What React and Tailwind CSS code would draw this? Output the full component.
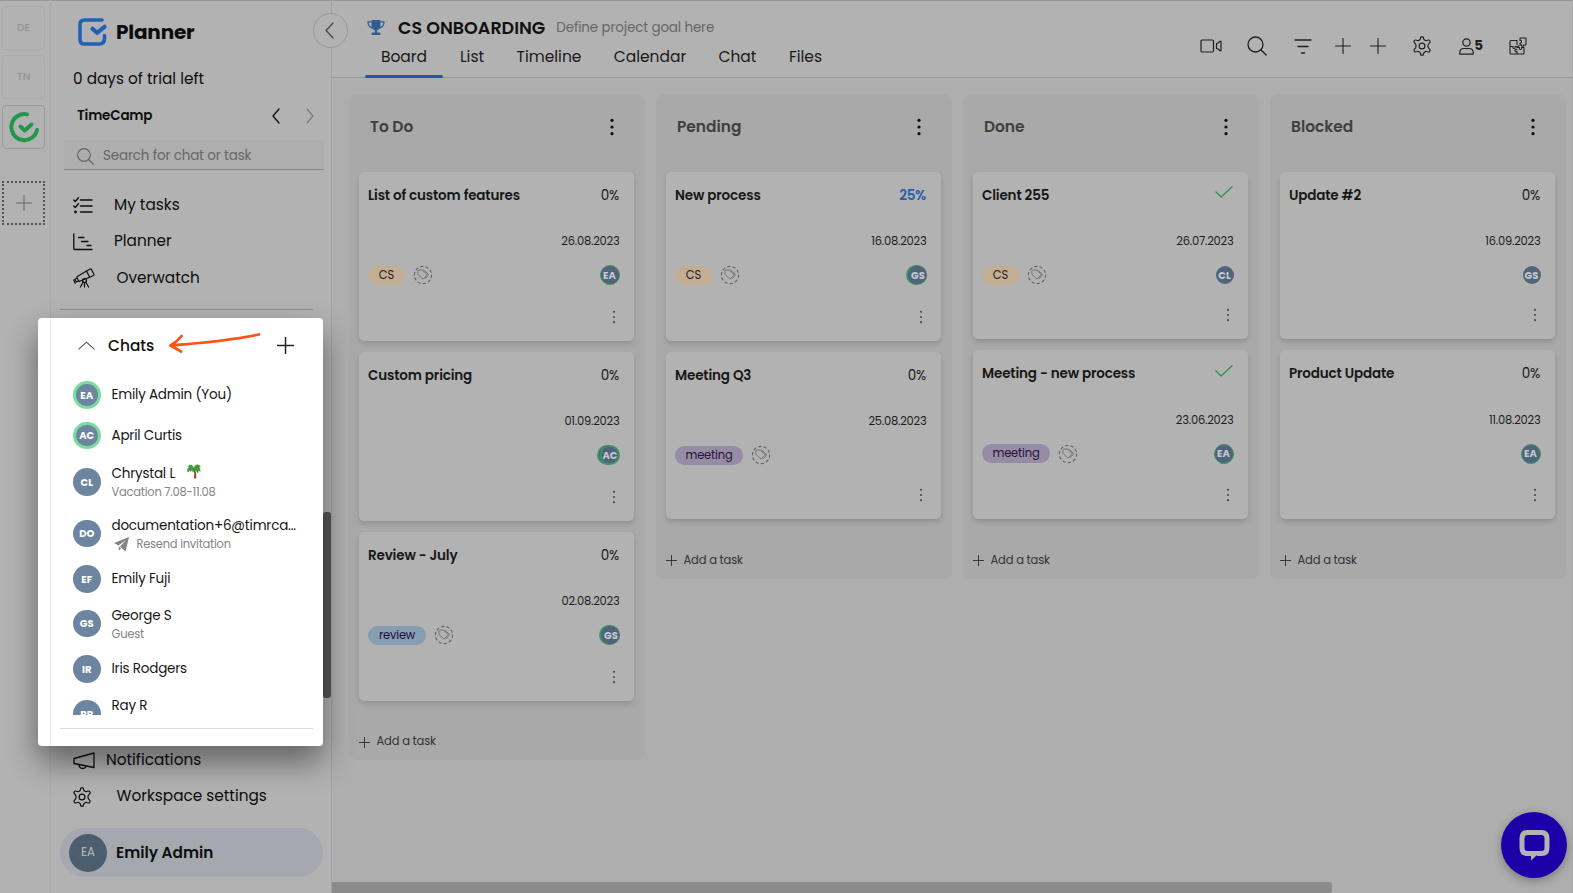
import React from 'react';
import clsx from 'clsx';

const columns = [
  {
    title: 'To Do',
    tasks: [
      { title: 'List of custom features', progress: 0, date: '26.08.2023', tag: 'CS', user: 'EA', ring: 'full' },
      { title: 'Custom pricing', progress: 0, date: '01.09.2023', user: 'AC', ring: 'stack' },
      { title: 'Review - July', progress: 0, date: '02.08.2023', tag: 'review', user: 'GS', ring: 'left' },
    ],
  },
  {
    title: 'Pending',
    tasks: [
      { title: 'New process', progress: 25, date: '16.08.2023', tag: 'CS', user: 'GS', ring: 'left' },
      { title: 'Meeting Q3', progress: 0, date: '25.08.2023', tag: 'meeting' },
    ],
  },
  {
    title: 'Done',
    tasks: [
      { title: 'Client 255', done: true, date: '26.07.2023', tag: 'CS', user: 'CL' },
      { title: 'Meeting - new process', done: true, date: '23.06.2023', tag: 'meeting', user: 'EA', ring: 'full' },
    ],
  },
  {
    title: 'Blocked',
    tasks: [
      { title: 'Update #2', progress: 0, date: '16.09.2023', user: 'GS' },
      { title: 'Product Update', progress: 0, date: '11.08.2023', user: 'EA', ring: 'full' },
    ],
  },
];

const chats = [
  { initials: 'EA', name: 'Emily Admin (You)', online: true, row: 'h-10' },
  { initials: 'AC', name: 'April Curtis', online: true, row: 'h-[41px]' },
  { initials: 'CL', name: 'Chrystal L', note: 'Vacation 7.08-11.08', palm: true, row: 'h-[52px]' },
  { initials: 'DO', name: 'documentation+6@timrca...', note: 'Resend invitation', invite: true, row: 'h-[51px]' },
  { initials: 'EF', name: 'Emily Fuji', row: 'h-10' },
  { initials: 'GS', name: 'George S', note: 'Guest', row: 'h-[49px]' },
  { initials: 'IR', name: 'Iris Rodgers', row: 'h-[42px]' },
  { initials: 'RR', name: 'Ray R', note: ' ', row: 'h-12' },
];

const tabs = [
  { name: 'Board', width: 'w-[78px]' },
  { name: 'List', width: 'w-[58px]' },
  { name: 'Timeline', width: 'w-[96px]' },
  { name: 'Calendar', width: 'w-[106px]' },
  { name: 'Chat', width: 'w-[69px]' },
  { name: 'Files', width: 'w-[67px]' },
];

const tagColors = {
  CS: 'w-[37px] bg-[#c2ae92] text-[#2d1a24]',
  review: 'w-[58px] bg-[#869db3] text-[#1c1238]',
  meeting: 'w-[68px] bg-[#958ca5] text-[#2c1038]',
};

const Icon = ({ className, children, box = '0 0 24 24', width = 1.2 }) => (
  <svg className={clsx('shrink-0', className)} viewBox={box} fill="none" stroke="currentColor" strokeWidth={width} strokeLinecap="round" strokeLinejoin="round">
    {children}
  </svg>
);

const Plus = ({ className, width }) => (
  <Icon className={className} box="0 0 16 16" width={width}>
    <path d="M8 .5v15M.5 8h15" />
  </Icon>
);

const Gear = ({ className }) => (
  <Icon className={className} box="0 0 20 20" width={1.2}>
    <circle cx="10" cy="10" r="2.9" />
    <path d="M8.3 3 8.7 1.3Q8.9.8 9.4.8h1.2q.5 0 .7.5L11.8 3q.3.9 1.2 1.3.8.5 1.7.2l1.9-.5q.5-.1.8.3l.7 1.2q.3.5-.1.9l-1.3 1.4q-.7.7-.7 1.6v1.2q0 .9.7 1.6l1.3 1.4q.4.4.1.9l-.7 1.2q-.3.4-.8.3l-1.9-.5q-.9-.3-1.7.2-.9.4-1.2 1.3l-.5 1.7q-.2.5-.7.5H9.4q-.5 0-.7-.5L8.3 17q-.3-.9-1.2-1.3-.8-.5-1.7-.2l-1.9.5q-.5.1-.8-.3L2 14.5q-.3-.5.1-.9l1.3-1.4q.6-.7.6-1.6V9.4q0-.9-.6-1.6L2.1 6.4Q1.700 6 2 5.500l.7-1.200q.3-.4.8-.3l1.900.5q.9.300 1.700-.2Q8 3.900 8.300 3Z" />
  </Icon>
);

const Dots = ({ small }) => (
  <svg className={small ? 'h-[14px] w-1' : 'h-[18px] w-1'} viewBox={small ? '0 0 4 14' : '0 0 4 18'} fill="currentColor">
    {small ? (
      <>
        <circle cx="2" cy="1.8" r="1.1" />
        <circle cx="2" cy="7" r="1.1" />
        <circle cx="2" cy="12.2" r="1.1" />
      </>
    ) : (
      <>
        <circle cx="2" cy="2.3" r="1.6" />
        <circle cx="2" cy="9" r="1.6" />
        <circle cx="2" cy="15.7" r="1.6" />
      </>
    )}
  </svg>
);

const TagPicker = () => (
  <Icon className="h-5 w-5 text-[#626262]" box="0 0 20 20" width={1}>
    <circle cx="10" cy="10" r="8.6" strokeDasharray="2.4 3" strokeWidth="1.1" />
    <path d="M4.8 6.2q0-1.200 1.200-1.200h3.200l4.400 3.900q.7.800 0 1.600l-2.900 3q-.8.700-1.600 0L5.300 9.600Zm5.900-1.100 4.200 3.700q.8.900.1 1.800l-3 3.200" strokeWidth=".8" />
  </Icon>
);

const TaskAvatar = ({ user, ring }) => (
  <div
    className={clsx(
      'relative flex items-center justify-center rounded-full bg-[#50657a] text-[10px] font-bold text-[#c3cad0]',
      !ring && 'h-[18px] w-[18px]',
      ring === 'full' && 'h-5 w-5 border-[1.5px] border-[#3d9268]',
      ring === 'left' && 'h-5 w-[21px] border-l-2 border-b border-t border-[#3d9268] pl-0.5',
      ring === 'stack' && 'h-5 w-[23px] border-2 border-[#3d9268] pl-[4px]'
    )}
  >
    {ring === 'stack' && <span className="absolute left-[1.5px] top-[-1px] h-[18px] w-[17px] rounded-full border-l-2 border-[#3d9268]" />}
    {user}
  </div>
);

const TaskCard = ({ task }) => {
  const tall = Boolean(task.ring);
  return (
    <div className={clsx('flex flex-col rounded-[5px] bg-[#b2b2b2] pl-[9px] shadow-[0_3px_5px_rgba(0,0,0,0.14)]', tall ? 'h-[169px]' : 'h-[167.5px]')}>
      <div className="flex h-[49px] items-center justify-between pr-[14.5px] text-[13.5px] text-[#171717]">
        <span className="font-semibold tracking-[-0.011em]">{task.title}</span>
        {task.done ? (
          <Icon className="mb-2 h-3 w-[18px] text-[#2f9457]" box="0 0 18 12" width={1.3}>
            <path d="m1 6 5.200 5L17 .8" />
          </Icon>
        ) : (
          <span className={task.progress ? 'font-semibold tracking-[-0.02em] text-[#2a5ea8]' : 'tracking-[-0.02em]'}>{task.progress}%</span>
        )}
      </div>
      <div className="flex h-[43px] items-center justify-end pr-[14px] text-[11.5px] tracking-[-0.02em] text-[#1e1e1e]">{task.date}</div>
      <div className="flex h-[23px] items-center justify-between pr-[14px]">
        <div className="flex items-center gap-2">
          {task.tag && (
            <>
              <span className={clsx('flex h-[19px] items-center justify-center rounded-full pt-px text-[11.5px] tracking-[-0.015em]', tagColors[task.tag])}>{task.tag}</span>
              <TagPicker />
            </>
          )}
        </div>
        {task.user && <TaskAvatar user={task.user} ring={task.ring} />}
      </div>
      <div className={clsx('flex justify-end pr-[17.5px] text-[#4c4c4c]', tall ? 'pt-[23px]' : 'pt-[21.5px]')}>
        <Dots small />
      </div>
    </div>
  );
};

const Column = ({ column }) => (
  <section className="flex w-[296px] shrink-0 flex-col rounded-lg bg-[#a9a9a9] pr-[11.5px] pl-[10px] pb-2">
    <div className="flex h-[77.5px] items-start justify-between pl-[11px] pr-5 pt-[23px]">
      <h2 className="text-[15.4px] leading-5 font-semibold text-[#3f3f3f]">{column.title}</h2>
      <span className="pt-px text-[#0c0c0c]">
        <Dots />
      </span>
    </div>
    <div className="flex flex-col gap-[11px]">
      {column.tasks.map((task) => (
        <TaskCard key={task.title} task={task} />
      ))}
    </div>
    <button className="mt-[31.5px] flex h-5 items-center gap-[6.5px] text-[11.5px] tracking-[-0.016em] text-[#333]">
      <Plus className="h-[11px] w-[11px]" width={1.4} />
      Add a task
    </button>
  </section>
);

const RailBox = ({ children, active }) => (
  <div className={clsx('flex h-11 w-[43px] items-center justify-center rounded-[4px] border text-[10.5px] font-medium text-[#949494]', active ? 'border-[#999]' : 'border-[#a9a9a9]')}>
    {children}
  </div>
);

const Rail = () => (
  <div className="flex w-[51px] shrink-0 flex-col gap-[5.5px] border-r border-[#a9a9a9] pl-[2px] pt-[5.5px]">
    <RailBox>DE</RailBox>
    <RailBox>TN</RailBox>
    <RailBox active>
      <svg className="h-8 w-8" viewBox="0 0 32 32" fill="none" stroke="#22964c" strokeWidth="4" strokeLinecap="round" strokeLinejoin="round">
        <path d="M19 3.400A13 13 0 1 0 29 19" />
        <path d="m12.500 15.500 4.300 4.100 6.700-6" />
      </svg>
    </RailBox>
    <div className="mt-[27px] flex h-11 w-[43px] items-center justify-center border-2 border-dotted border-[#555] text-[#666]">
      <Plus className="h-4 w-4" width={1} />
    </div>
  </div>
);

const Sidebar = () => (
  <aside className="relative flex w-[281px] shrink-0 flex-col border-r border-[#a2a2a2] text-[15.3px] text-[#0d0d0d]">
    <div className="flex h-[64px] items-center gap-[9px] pl-[26px]">
      <svg className="h-[30px] w-[30px]" viewBox="0 0 30 30" fill="none" stroke="#235fb5" strokeWidth="3.600" strokeLinecap="round" strokeLinejoin="round">
        <path d="M25 3H7.500Q3 3 3 7.500v15Q3 27 7.500 27H22q5.500 0 5.500-5.500v-3" />
        <path d="m15.500 11.800 4.500 4 7.500-6" strokeWidth="4.200" />
      </svg>
      <h1 className="text-[20px] font-bold tracking-[-0.01em]">Planner</h1>
    </div>
    <div className="flex h-[30px] items-center pl-[22px]">0 days of trial left</div>
    <div className="flex h-[44px] items-center pl-[26px] pr-[17px] text-[13.5px] font-semibold">
      <span className="flex-1 tracking-[-0.015em]">TimeCamp</span>
      <Icon className="mr-[26px] h-4 w-2" box="0 0 8 16" width={1.3}><path d="M7 1 1 8l6 7" /></Icon>
      <Icon className="h-4 w-2 text-[#666]" box="0 0 8 16" width={1.1}><path d="m1 1 6 7-6 7" /></Icon>
    </div>
    <div className="ml-[13px] mt-[2px] flex h-[30px] w-[260px] items-center gap-[9px] border-b border-[#858585] bg-[#aeaeae] pl-[13px] pt-[3px] text-[13.5px] text-[#666]">
      <Icon className="h-[17px] w-[17px]" box="0 0 17 17" width={1.2}>
        <circle cx="7" cy="7" r="6.300" />
        <path d="m11.500 11.500 5 4.700" />
      </Icon>
      <span className="pt-px tracking-[-0.013em]">Search for chat or task</span>
    </div>
    <nav className="mt-[17.5px] flex flex-col pl-[22px]">
      <div className="flex h-9 items-center gap-[21px]">
        <Icon className="h-[17px] w-5" box="0 0 20 17" width={1.4}>
          <path d="M7.500 3H19M7.500 9H19M7.500 15H19M.8 3l1.500 1.500L5.500.8M.8 9l1.500 1.500 3.200-3.700" />
          <circle cx="2.500" cy="15" r=".7" fill="currentColor" />
        </Icon>
        My tasks
      </div>
      <div className="flex h-9 items-center gap-[21px]">
        <Icon className="h-[18px] w-5" box="0 0 20 18" width={1.3}>
          <path d="M.8 1v14.500q0 1 1 1H19M5.500 4.500H11M8.500 8.500H15M14 12.500h4" />
        </Icon>
        Planner
      </div>
      <div className="flex h-9 items-center gap-[21.5px] pt-px">
        <Icon className="h-5 w-[22px]" box="0 0 22 20" width={1.2}>
          <path d="m13.500 3 3.700-2q.9-.4 1.300.4l2.400 4.800q.4.900-.4 1.300l-3.800 1.700ZM13.500 3l3.200 6.200L6 13.500l-2-3.800Q3.600 9 4.300 8.600ZM4.200 10l-2.300 1.200 1.300 2.800L5.600 13M.8 12l1.400 3.300" />
          <circle cx="11.500" cy="12.500" r="2" />
          <path d="m10.300 14-3 5M12.600 14l3 5M11.500 14.500V19" />
        </Icon>
        Overwatch
      </div>
    </nav>
    <hr className="ml-[9px] mt-[13.5px] w-[253px] border-[#8d8d8d]" />
    <div className="mt-auto mb-[16px] flex flex-col">
      <div className="flex h-9 items-center gap-[11px] pl-[22px] pt-px">
        <Icon className="h-[18px] w-[22px]" box="0 0 22 18" width={1.3}>
          <path d="M1 6.500 21 1v14.500L1 11.500ZM6 12.800q.3 3.700 3.700 3.700 3 0 3.400-2.500" />
        </Icon>
        Notifications
      </div>
      <div className="flex h-9 items-center gap-[24.5px] pl-[21px] pt-px">
        <Gear className="h-5 w-5" />
        <span>Workspace settings</span>
      </div>
      <div className="ml-[9px] mt-[14px] flex h-[49px] w-[263px] items-center gap-[9px] rounded-full bg-[#a5a9af] pl-[9px]">
        <div className="flex h-[38px] w-[38px] items-center justify-center rounded-full bg-[#4c5d6e] text-[11.5px] font-medium text-[#a8afb6]">EA</div>
        <span className="pt-px font-semibold">Emily Admin</span>
      </div>
    </div>
    {/* collapse toggle sits on the divider */}
    <button className="absolute right-[-17px] top-[13px] z-10 flex h-[35px] w-[35px] items-center justify-center rounded-full border border-[#999] bg-[#b2b2b2] text-[#444]">
      <Icon className="mr-[2px] h-[17px] w-[9px]" box="0 0 9 17" width={1.2}><path d="M8 1 1 8.500 8 16" /></Icon>
    </button>
    <span className="absolute right-0 top-[512px] h-[186px] w-2 rounded-[3px] bg-[#565656]" />
  </aside>
);

const Header = () => (
  <header className="flex h-[78px] shrink-0 justify-between border-b border-[#969696] pl-[33px]">
    <div className="flex flex-col">
      <div className="flex h-[42px] items-center pl-[2px] pt-[14px]">
        <svg className="h-4 w-[18px] text-[#2f5f92]" viewBox="0 0 18 16" fill="currentColor">
          <path d="M4.500 0h9v5q0 4.300-3.300 5v2.500h2.300q1 0 1 1.500v1h-9v-1q0-1.500 1-1.500h2.300V10Q4.500 9.300 4.500 5Z" />
          <path d="M4.500 1.800H1q0 5 4.500 6.200M13.500 1.800H17q0 5-4.500 6.200" fill="none" stroke="currentColor" strokeWidth="1.300" />
        </svg>
        <h1 className="ml-[13px] text-[17.5px] font-semibold text-[#111]">CS ONBOARDING</h1>
        <span className="ml-[11px] pt-px text-[13.5px] tracking-[-0.012em] text-[#666]">Define project goal here</span>
      </div>
      <div className="flex flex-1 text-[15.5px] text-[#1a1a1a]">
        {tabs.map((tab) => (
          <div key={tab.name} className={clsx('relative flex justify-center pt-[3px]', tab.width)}>
            {tab.name}
            {tab.name === 'Board' && <span className="absolute bottom-[-1px] left-0 h-[3px] w-full rounded-full bg-[#27569f]" />}
          </div>
        ))}
      </div>
    </div>
    <div className="flex items-center pr-[45px] pt-[15px] text-[#1f1f1f]">
      <Icon className="mr-[25px] h-[14px] w-[22px]" box="0 0 22 14" width={1.2}>
        <rect x="1" y="1" width="12.500" height="12" rx="1.200" />
        <path d="M16.500 4.500v5l2 .6 1.200 1.600h1.300v-9.400h-1.300l-1.200 1.600Z" />
      </Icon>
      <Icon className="mr-[27px] h-5 w-5" box="0 0 20 20" width={1.3}>
        <circle cx="8.500" cy="8.500" r="7.500" />
        <path d="m14 14 5.200 5" />
      </Icon>
      <Icon className="mr-[23px] h-[15px] w-[18px]" box="0 0 18 15" width={1.3}>
        <path d="M1 1h16M4 7.500h10M7.500 14h3" />
      </Icon>
      <Plus className="mr-[18.5px] h-4 w-4" width={1.1} />
      <Plus className="mr-[26.5px] h-4 w-4" width={1.1} />
      <Gear className="mr-[27px] h-5 w-5" />
      <Icon className="h-[17px] w-[15px]" box="0 0 15 17" width={1.2}>
        <circle cx="7.500" cy="4.500" r="3.700" />
        <path d="M.8 16.200v-1.700q0-4 4.200-4h5q4.200 0 4.200 4v1.700Z" />
      </Icon>
      <span className="mr-[26px] text-[13.5px] font-bold">5</span>
      <Icon className="h-[18px] w-[18px]" box="0 0 18 18" width={1.1}>
        <path d="M8 3.500H2q-1 0-1 1V16q0 1 1 1h12q1 0 1-1v-5.500M8 3.500v4M1 9.500h3q-.5 2 1 2t1-2h2q2 0 2-1M8 17v-2.500q-2 .5-2-1t2-1M8 10.500h2.500q-.5 2 1 2t1-2H15" />
        <path d="M11 1h6v6q0 1-1 1h-1.500q.3 1.300-.9 1.300T12.700 8H11V6q1.500.3 1.500-1.300T11 3.500Z" />
      </Icon>
    </div>
  </header>
);

const Palm = () => (
  <svg className="h-[15px] w-[14px]" viewBox="0 0 14 15">
    <path d="M6.300 5q1.700 4 .7 9.500h2.300Q10 9 7.700 4.500Z" fill="#8a5138" />
    <path d="M7 4Q5.500.3 2.500.8L.5 3l2-.2Q0 4 0 7l1.200 1.500L2.500 6.500l1 1.500L5 6l.7 2.500q1.500-.8 1.500-2.500l1.200 1 .8-.5 1 2.500 1.300-.8.3-2 1.400 2q.8-3.700-1.200-5L14 3Q11.500-.2 9 .8L7.500 2.300Z" fill="#3f9a3a" />
  </svg>
);

const ChatRow = ({ chat }) => (
  <div className={clsx('flex shrink-0 items-center gap-[11px]', chat.row)}>
    <div
      className={clsx(
        'flex h-[27.5px] w-[27.5px] shrink-0 items-center justify-center rounded-full bg-[#6d85a0] text-[10px] font-bold text-white',
        chat.online && 'border-[3px] border-[#78dd9c]'
      )}
    >
      {chat.initials}
    </div>
    <div className="flex flex-col whitespace-nowrap">
      <div className={clsx('flex items-center text-[13.5px] leading-5 tracking-[-0.015em] text-[#161616]', chat.note && 'pt-[2px]')}>
        {chat.name}
        {chat.palm && <span className="-mt-1.5 ml-[12px]"><Palm /></span>}
      </div>
      {chat.note && (
        <div className="flex h-[18px] items-center text-[11.5px] tracking-[-0.022em] text-[#858585]">
          {chat.invite && (
            <svg className="ml-[2px] mr-2 h-[15px] w-[15px]" viewBox="0 0 15 15" fill="#858585">
              <path fillRule="evenodd" d="M15 0 0 6l4.500 2.500L12 3 6 9.500l5.500 5L15 0ZM4.800 9.300v4.500L7 11.400Z" />
            </svg>
          )}
          {chat.note}
        </div>
      )}
    </div>
  </div>
);

const ChatsPanel = () => (
  <div className="absolute left-[38px] top-[318px] z-20 flex h-[427.5px] w-[285px] rounded-[4px] bg-white shadow-[0_16px_32px_rgba(0,0,0,0.45)]">
    <div className="w-[13px] shrink-0 border-r border-[#f0f0f0]" />
    <div className="flex flex-1 flex-col pl-[22px]">
      <div className="flex h-[57px] items-center pb-[2px]">
        <Icon className="ml-[5px] h-[9px] w-[17px] text-[#555]" box="0 0 17 9" width={1.1}><path d="m.8 8.200 7.700-7 7.700 7" /></Icon>
        <h2 className="ml-[13px] w-[49px] text-[15.4px] font-medium text-[#111]">Chats</h2>
        <Icon className="mb-[5px] ml-[11px] h-5 w-[93px] text-[#f95518]" box="0 0 93 20" width={2.8}>
          <path d="M91 1.500Q60 8 3 12.500M13.500 3Q9 9 2.500 12.500 7 15 13 18.500" />
        </Icon>
        <Plus className="ml-[16px] h-[17px] w-[17px] text-[#222]" width={1.4} />
      </div>
      <div className="flex h-[340px] flex-col overflow-hidden">
        {chats.map((chat) => (
          <ChatRow key={chat.initials} chat={chat} />
        ))}
      </div>
      <hr className="-ml-[13px] mt-[13px] w-[253px] border-[#dcdcdc]" />
    </div>
  </div>
);

export default function App() {
  return (
    <div className="relative flex h-[893px] w-[1573px] overflow-hidden border-r border-r-[#a6a6a6] bg-[#b2b2b2] font-['Poppins','Inter',sans-serif] shadow-[inset_0_1px_0_#979797]">
      <Rail />
      <Sidebar />
      <main className="relative flex min-w-0 flex-1 flex-col">
        <Header />
        <div className="flex flex-1 items-start gap-[11px] bg-[#aeaeae] pl-[17px] pt-4">
          {columns.map((column) => (
            <Column key={column.title} column={column} />
          ))}
        </div>
        <span className="absolute bottom-0 left-0 h-[11px] w-[1000px] rounded-r-[3px] bg-[#8b8b8b]" />
      </main>
      <ChatsPanel />
      <button className="absolute bottom-[15px] right-[5px] flex h-[66px] w-[66px] items-center justify-center rounded-full bg-[#1c00a8] shadow-[0_3px_10px_rgba(0,0,0,0.3)]">
        <svg className="h-8 w-[31px]" viewBox="0 0 31 32" fill="none">
          <path d="M12 24.500H8.500Q3 24.500 3 19V9.500Q3 3.500 8.500 3.500h14Q28 3.500 28 9.500V19q0 5.500-5.500 5.500H18" stroke="#b2b2b2" strokeWidth="5" />
          <path d="M12 22h10q-3 2-4.500 4.500L12 31.500Z" fill="#b2b2b2" />
        </svg>
      </button>
    </div>
  );
}
